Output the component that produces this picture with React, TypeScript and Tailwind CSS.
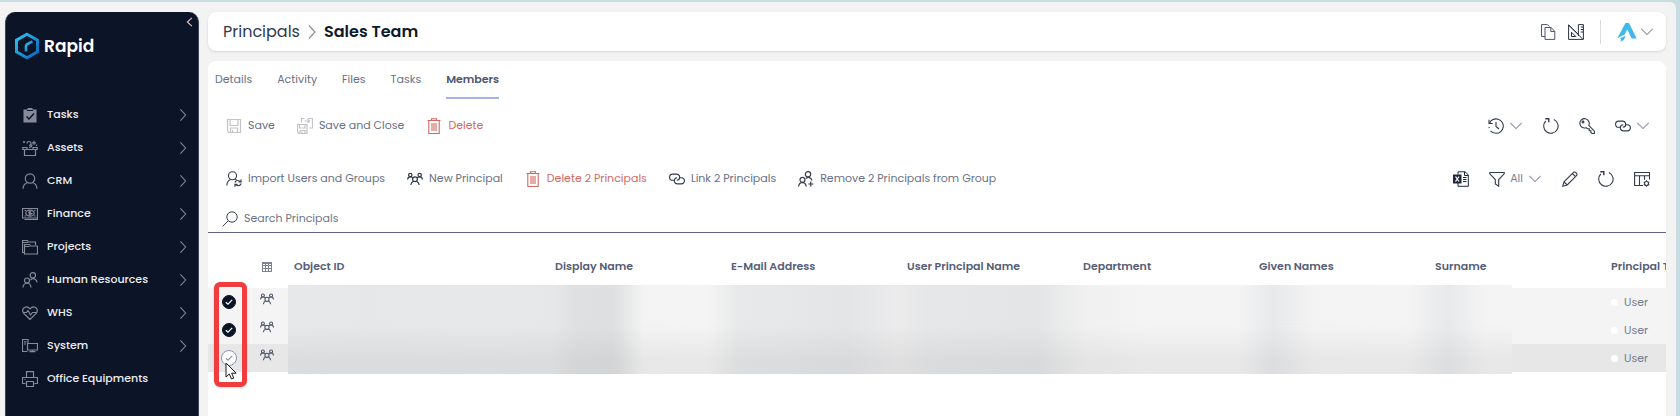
import React from "react";

type IconProps = { className?: string };

function Glyph({ className = "size-4", children, sw = 1 }: { className?: string; children: React.ReactNode; sw?: number }) {
  return (
    <svg viewBox="0 0 16 16" fill="none" stroke="currentColor" strokeWidth={sw} className={"shrink-0 " + className} aria-hidden="true">
      {children}
    </svg>
  );
}

const ChevronRight = ({ className }: IconProps) => (
  <Glyph className={className} sw={1.2}><path d="M5 1.500l6 6.500-6 6.500" /></Glyph>
);
const ChevronDown = ({ className = "size-3.5 text-[#8d93a3]" }: IconProps) => (
  <Glyph className={className} sw={1.2}><path d="M1.500 4.500L8 11l6.500-6.500" /></Glyph>
);

/* sidebar icons */
const TasksIcon = () => (
  <Glyph>
    <path d="M1.500 2.500h3.500l1-1.500h4l1 1.500h3.500v13h-13z" fill="currentColor" stroke="none" />
    <path d="M5 3.500h6" stroke="#0c1427" />
    <path d="M4.500 9.500l2.500 2.500 5-5.500" stroke="#0c1427" strokeWidth="1.500" />
  </Glyph>
);
const AssetsIcon = () => (
  <Glyph sw={1.2}>
    <path d="M2.500 9v6.500h11V9M.8 7.500h4.200v2H.8zM11 7.500h4.200v2H11zM5 9.500h6" />
    <path d="M5 3.500q0-2 2-2t2 2-2 2M7 7.500q3 0 3-3" />
    <path d="M12 .8v4M10 2.800h4M2 1v2M1 2h2M14.500 4.500v1.500" />
  </Glyph>
);
const PersonIcon = () => (
  <Glyph sw={1.2}>
    <circle cx="8" cy="5.500" r="4.700" />
    <path d="M1 15.800c.3-3.600 2-5.600 4.600-6.300M15 15.800c-.3-3.600-2-5.600-4.600-6.300" />
  </Glyph>
);
const FinanceIcon = () => (
  <Glyph sw={1.2}>
    <path d="M.5 2.500h15v9.500H.500zM2.500 13.500h13v-1.500" />
    <path d="M2.500 4.500h1.500M12 4.500h1.500M2.500 10h1.500M12 10h1.500" />
    <ellipse cx="8" cy="7.200" rx="4.200" ry="3" />
    <path d="M8 4.500v5.500M9.300 6q-2.600-.6-2.600.5t2.600 1-2.600 1.200" />
  </Glyph>
);
const ProjectsIcon = () => (
  <Glyph sw={1.2}>
    <path d="M2.500 13.500h-2v-12h5l1 1.500h7v3" />
    <path d="M2.500 5.500h5l1.200 1.500h6.800v8h-13zM.5 3.500h5.500M2.500 7.500h5" />
  </Glyph>
);
const PeopleIcon = () => (
  <Glyph sw={1.2}>
    <circle cx="10.800" cy="3.300" r="2.700" />
    <path d="M8.500 8q2.400-2.300 4.600-.8 1.800 1.200 2 3.300" />
    <circle cx="5" cy="8.500" r="2.500" />
    <path d="M1 15.500q.4-4.300 4-4.500 3.600.2 4 4.500" />
  </Glyph>
);
const HeartIcon = () => (
  <Glyph sw={1.2}>
    <path d="M8 14.500L1.800 8.300Q-.3 5.500 1.600 3.200 4.700.3 8 3.800q3.300-3.500 6.400-.6 1.900 2.300-.2 5.100z" />
    <path d="M1 7.500h3.500L6 5.500l2.500 4.500L10.500 7.500H15" />
  </Glyph>
);
const SystemIcon = () => (
  <Glyph sw={1.2}>
    <path d="M5.500 13.500h-5v-12h5.500v4M2 3.800h2.500M2 6h2" />
    <path d="M5.500 5.500h10v6.500h-10zM10.500 12v2M7.500 13.700h6" />
  </Glyph>
);
const PrinterIcon = () => (
  <Glyph sw={1.2}>
    <path d="M4.500 6.500V.6h7v5.900M3.500 12.500h-3V6.500h15v6h-3M4.500 10.500h7v5h-7zM2.500 8.500h1" />
  </Glyph>
);

/* command bar icons */
const SaveIcon = () => (
  <Glyph className="size-4 text-[#c4c4c8]" sw={1.2}>
    <path d="M1.500 1.500h13v13H3l-1.500-1.500zM4 1.500V7.500h8V1.500M4.500 14.500v-4.500h7v4.500M6.500 12v2.500" />
  </Glyph>
);
const SaveCloseIcon = () => (
  <Glyph className="size-4 text-[#c4c4c8]" sw={1.2}>
    <path d="M.5 6.500h9.500v9h-8l-1.500-1.500zM2.500 6.500v3.500h5.500V6.500M3 15.500v-3h5v3M5 13.500v2" />
    <path d="M4.500 4.500v-4h3M11 .5h4.500v9.500h-3M7.500 3h5M10.500 1l2 2-2 2" />
  </Glyph>
);
const TrashIcon = () => (
  <Glyph className="size-4 text-[#cf6a63]" sw={1.1}>
    <path d="M1.500 2.500h13M5.500 2.500V.8h5v1.700M2.800 2.500v13h10.400v-13M6 5v8M8 5v8M10 5v8" />
  </Glyph>
);
const ImportIcon = () => (
  <Glyph sw={1.1}>
    <circle cx="6.500" cy="4.800" r="4" />
    <path d="M.8 14.500c.2-3 1.500-4.900 3.700-5.900M9 8l1.500.8" />
    <path d="M8.800 11.500q1-2.200 3.200-2 1.500.1 2.500 1.500M15.200 12.500q-1 2.300-3.200 2.200-1.500-.1-2.500-1.500M15 8.500V11h-2.500M9 15.800v-2.500h2.500" strokeWidth="1.200" />
  </Glyph>
);
const GroupIcon = ({ className }: IconProps) => (
  <Glyph className={className} sw={1.2}>
    <circle cx="3.300" cy="4" r="1.700" />
    <circle cx="12.700" cy="4" r="1.700" />
    <circle cx="8" cy="8.300" r="2.400" />
    <path d="M.6 8.500Q.8 5.800 3.300 5.800q1.800 0 2.900 1.400M15.400 8.500Q15.200 5.800 12.700 5.800q-1.800 0-2.900 1.400M3.800 14Q4.200 11 6.500 10.200M12.200 14Q11.800 11 9.500 10.200" />
  </Glyph>
);
const LinkIcon = () => (
  <Glyph sw={1.1}>
    <path d="M6 9.300H3.700a3.100 3.100 0 010-6.200h3.900a3.100 3.100 0 013.100 3.100 3.100 3.100 0 01-2.900 3.100" />
    <path d="M10.500 6.700h1.800a3.100 3.100 0 010 6.200H8.400a3.100 3.100 0 01-3.100-3.100 3.100 3.100 0 012.900-3.100" />
  </Glyph>
);
const PeopleAddIcon = () => (
  <Glyph sw={1.2}>
    <circle cx="10" cy="3.300" r="2.700" />
    <path d="M8 7.500q2.300-1.900 4.200-.5 1.500 1 1.700 2.500" />
    <circle cx="4.500" cy="8.800" r="2.500" />
    <path d="M.6 15.500q.4-4 3.900-4.200 3.200.2 3.700 4.200M12.800 10.500v5M10.300 13h5" />
  </Glyph>
);
const HistoryIcon = () => (
  <Glyph sw={1.1}>
    <path d="M1.500 5.200A7.200 7.200 0 118 15.300a7.300 7.300 0 01-5.500-2.500" />
    <path d="M1 1.800v3.700h3.700M8 4v4.500l3 2.500" />
    <path d="M1 9l.3 1.200" />
  </Glyph>
);
const RefreshIcon = () => (
  <Glyph sw={1.1}>
    <path d="M10.800 1.500A7.200 7.200 0 112.800 3" />
    <path d="M2.300.8h3.500v3.500" strokeWidth="1.400" />
  </Glyph>
);
const KeyIcon = () => (
  <Glyph sw={1.1}>
    <path d="M9.800 7.300a4.700 4.700 0 10-2.600 2.400l1.300 1.100h1.700v1.900h1.700v1.800l1.200 1h2.300v-2.400z" />
    <circle cx="4" cy="4" r=".9" />
  </Glyph>
);
const ExcelIcon = () => (
  <Glyph className="size-4 text-[#1e2637]">
    <path d="M5 3.500V.8h7l3.300 3v11.500H5V12M11.500.8V4.500h3.800" />
    <path d="M10 6.500h3.500M10 8.500h3.500M10 10.500h3.500" />
    <path d="M0 3.500h8.500v9H0z" fill="currentColor" stroke="none" />
    <path d="M2.500 5.500l3.500 5M6 5.500l-3.500 5" stroke="#fff" strokeWidth="1.300" />
  </Glyph>
);
const FilterIcon = () => (
  <Glyph sw={1.1}><path d="M.8 1.500h14.400v1.300L9.700 8.500v6.700L6.300 13V8.500L.8 2.800z" /></Glyph>
);
const PencilIcon = () => (
  <Glyph sw={1.1}>
    <path d="M.8 15.200l1.200-4.400L11.500 1.300q1-.8 2.200.2l.8.800q1 1.200.2 2.200L5.200 14zM2 10.800L5.200 14M10.300 2.500l3.200 3.200" />
  </Glyph>
);
const TableSettingsIcon = () => (
  <Glyph sw={1.1}>
    <path d="M9 14.500H.6v-13h14.900v7M.5 4.800h15M5.500 4.800v9.700M10.500 4.800v4" />
    <circle cx="12.500" cy="12.500" r="2" />
    <path d="M12.500 9.300v1.200M12.500 14.500v1.300M9.700 10.900l1.100.6M14.200 13.500l1.100.6M9.700 14.100l1.100-.6M14.200 11.500l1.100-.6" />
  </Glyph>
);
const CopyIcon = () => (
  <Glyph className="size-4 text-[#4d5570]">
    <path d="M5 12.500H1.500V.6h6l2 2" />
    <path d="M5 3.500h6l3.800 3.700v8.200H5zM10.800 3.500v4h4" />
  </Glyph>
);
const RulerIcon = () => (
  <Glyph className="size-4 text-[#2b2f42]">
    <path d="M.6 1v14.400h14.800V.6h-5v9.800zM.6 1L15 15.400M3.500 8.200v4.300h4.300zM12.800 3h2.600M12.800 5.500h2.600M12.800 8h2.600M10.400 10v2" />
  </Glyph>
);
const SearchIcon = () => (
  <Glyph className="size-4 text-[#3c4356]">
    <circle cx="10" cy="6" r="5.200" />
    <path d="M6.300 9.700L.6 15.400" />
  </Glyph>
);
const GridIcon = () => (
  <svg viewBox="0 0 10 10" className="size-2.5 text-[#7d8496]" fill="none" stroke="currentColor" aria-hidden="true">
    <path d="M0 1h10" strokeWidth="2" />
    <path d="M0 3.500h10M0 6.500h10M0 9.500h10M.5 0v10M3.500 0v10M6.500 0v10M9.500 0v10" />
  </svg>
);

const nav: { label: string; icon: React.ReactNode; more: boolean }[] = [
  { label: "Tasks", icon: <TasksIcon />, more: true },
  { label: "Assets", icon: <AssetsIcon />, more: true },
  { label: "CRM", icon: <PersonIcon />, more: true },
  { label: "Finance", icon: <FinanceIcon />, more: true },
  { label: "Projects", icon: <ProjectsIcon />, more: true },
  { label: "Human Resources", icon: <PeopleIcon />, more: true },
  { label: "WHS", icon: <HeartIcon />, more: true },
  { label: "System", icon: <SystemIcon />, more: true },
  { label: "Office Equipments", icon: <PrinterIcon />, more: false },
];

function Sidebar() {
  return (
    <aside className="relative mt-2.5 ml-[5px] w-[194px] shrink-0 rounded-t-[10px] border-x border-[#3d4557] bg-[#0c1427]">
      <button aria-label="Collapse menu" className="absolute top-1 right-0.5 text-[#e2c6c6]">
        <Glyph className="size-3"><path d="M10.500 2.500L4.500 8l6 5.500" strokeWidth="1.500" /></Glyph>
      </button>
      <a href="#home" className="mt-5 ml-2 flex items-center gap-1 text-white">
        <svg viewBox="0 0 26 28" className="h-7 w-[26px]" fill="none" aria-hidden="true">
          <defs>
            <linearGradient id="hex" x1="0" y1="0" x2="1" y2="1">
              <stop offset="0" stopColor="#35c3f2" />
              <stop offset="1" stopColor="#0b62b8" />
            </linearGradient>
          </defs>
          <path d="M13 2.200l10.500 5.900v11.800L13 25.800 2.500 19.900V8.100z" stroke="url(#hex)" strokeWidth="3" />
          <path d="M12 19.500v-5q0-1.500 1.300-2.300L18.500 9.500" stroke="url(#hex)" strokeWidth="2.600" />
        </svg>
        <span className="pt-0.5 text-[17px] font-semibold">Rapid</span>
      </a>
      <nav className="mt-[38px]">
        {nav.map((n) => (
          <a key={n.label} href={"#" + n.label} className="flex h-[33px] items-center pr-2 pl-4 text-[#858b99]">
            {n.icon}
            <span className="ml-[9px] flex-1 text-[11px] font-medium whitespace-nowrap text-[#eceef2]">{n.label}</span>
            {n.more && <ChevronRight className="size-3.5" />}
          </a>
        ))}
      </nav>
    </aside>
  );
}

function Command({ icon, label, danger = false }: { icon: React.ReactNode; label: string; danger?: boolean }) {
  return (
    <button className="flex items-center gap-1.5 text-[#333a4b]">
      {icon}
      <span className={danger ? "text-[#cf6a63]" : "text-[#687086]"}>{label}</span>
    </button>
  );
}

function IconButton({ name, children }: { name: string; children: React.ReactNode }) {
  return (
    <button aria-label={name} className="flex items-center gap-[5px] text-[#333a4b]">
      {children}
    </button>
  );
}

const tabs = ["Details", "Activity", "Files", "Tasks", "Members"];
const columns = ["Display Name", "E-Mail Address", "User Principal Name", "Department", "Given Names", "Surname", "Principal Type"];
const rows = [
  { id: 1, selected: true },
  { id: 2, selected: true },
  { id: 3, selected: false },
];

function MembersTable() {
  return (
    <div className="relative overflow-hidden pb-1">
      <table className="w-[1571px] table-fixed border-collapse text-left">
        <colgroup>
          <col className="w-10" />
          <col className="w-[38px]" />
          <col className="w-[261px]" />
          {columns.map((c) => (
            <col key={c} className="w-44" />
          ))}
        </colgroup>
        <thead>
          <tr className="h-[55px] text-[11px] text-[#565e78]">
            <th aria-label="Selected" />
            <th aria-label="Type"><span className="flex justify-center pt-3"><GridIcon /></span></th>
            {["Object ID", ...columns].map((c) => (
              <th key={c} className="px-2 pt-3 font-semibold whitespace-nowrap">{c}</th>
            ))}
          </tr>
        </thead>
        <tbody>
          {rows.map((r) => (
            <tr key={r.id} className={r.selected ? "h-7 bg-[#f4f4f4]" : "h-7 bg-[#e7e7e7]"}>
              <td className="p-0">
                <label className="relative flex h-7 items-center justify-center pl-0.5">
                  <input
                    type="checkbox"
                    defaultChecked={r.selected}
                    aria-label={"Select row " + r.id}
                    className="size-4 appearance-none rounded-full border border-[#8d93a3] bg-white checked:size-3.5 checked:border-[#0c1427] checked:bg-[#0c1427]"
                  />
                  <svg viewBox="0 0 8 8" fill="none" strokeWidth="1.200" className={r.selected ? "pointer-events-none absolute size-2 stroke-white" : "pointer-events-none absolute size-2 stroke-[#8d93a3]"} aria-hidden="true">
                    <path d="M.8 4.200l2.200 2L7.200 1.800" />
                  </svg>
                </label>
              </td>
              <td className="p-0 text-[#4d556b]">
                <span className="flex h-7 justify-center pt-1"><GroupIcon className="size-3.5" /></span>
              </td>
              {["Object ID", ...columns.slice(0, 6)].map((c) => (
                <td key={c} />
              ))}
              <td className="px-2 py-0 text-[11px] text-[#747c94]">
                <span className="flex items-center gap-1.5">
                  <i className="size-[7px] rounded-full bg-white" />
                  User
                </span>
              </td>
            </tr>
          ))}
        </tbody>
      </table>
      <div className="pointer-events-none absolute top-[52px] left-20 h-[89px] w-[1224px] bg-[linear-gradient(90deg,#e7e8e9_0px,#e6e7e9_80px,#e7e8e9_200px,#e6e7e9_265px,#dfe0e1_290px,#dddfe0_325px,#f3f3f3_355px,#f4f4f4_420px,#e8e9ea_450px,#e4e5e7_560px,#ebebec_610px,#e6e7e8_640px,#e4e5e7_750px,#f0f0f0_795px,#f4f4f4_860px,#f4f4f4_950px,#e8e9eb_985px,#f3f3f3_1025px,#f4f4f4_1120px,#e8e9eb_1160px,#f3f3f3_1195px,#f4f4f4_1224px)]">
        <div className="h-full bg-[linear-gradient(180deg,transparent_45%,rgba(0,0,0,0.05)_85%)]" />
      </div>
    </div>
  );
}

export default function App() {
  return (
    <div className="min-h-screen bg-[#c8dde1] pt-0.5 pr-1 font-[Poppins,Inter,sans-serif] text-[11px]">
      <div className="flex min-h-[calc(100vh-2px)] rounded-tr-md bg-[#f3f3f3]">
        <Sidebar />
        <main className="mt-2.5 mr-2.5 ml-[9px] flex min-w-0 flex-1 flex-col gap-2.5">
          <header className="flex h-[39px] shrink-0 items-center rounded-lg bg-white pr-3 pl-[15px] shadow-sm">
            <a href="#principals" className="text-base text-[#2f3a4d]">Principals</a>
            <ChevronRight className="mx-1 size-4 text-[#8d8d9a]" />
            <h1 className="text-base font-semibold text-[#10182b]">Sales Team</h1>
            <div className="ml-auto flex items-center">
              <IconButton name="Copy"><CopyIcon /></IconButton>
              <span className="w-3" />
              <IconButton name="Design"><RulerIcon /></IconButton>
              <span className="mx-4 h-6 w-px bg-[#dcdce0]" />
              <button aria-label="Account" className="flex items-center gap-[3px]">
                <svg viewBox="0 0 20 20" className="size-5" aria-hidden="true">
                  <path d="M8.500 1h3.500L19.700 16.500h-5L10.300 7.500 7.500 12.500.300 16.300z" fill="#3fb8ea" />
                  <path d="M2.800 16.500l5.700-2.700-1.300 3.700-3.700 2.500.7-3z" fill="#3fb8ea" />
                </svg>
                <ChevronDown />
              </button>
            </div>
          </header>

          <section className="flex-1 rounded-t-lg bg-white">
            <div role="tablist" className="flex gap-[25px] pt-[9px] pl-[7px]">
              {tabs.map((t) => (
                <button
                  key={t}
                  role="tab"
                  aria-selected={t === "Members"}
                  className={t === "Members" ? "h-[29px] border-b-2 border-[#a5b4e0] pb-2 font-semibold text-[#4c5570]" : "h-[29px] border-b-2 border-transparent pb-2 text-[#687086]"}
                >
                  {t}
                </button>
              ))}
            </div>

            <div className="flex h-[53px] items-center pr-4 pl-[18px]">
              <div className="flex items-center gap-[22px]">
                <Command icon={<SaveIcon />} label="Save" />
                <Command icon={<SaveCloseIcon />} label="Save and Close" />
                <Command icon={<TrashIcon />} label="Delete" danger />
              </div>
              <div className="ml-auto flex items-center gap-5">
                <IconButton name="History"><HistoryIcon /><ChevronDown /></IconButton>
                <IconButton name="Refresh"><RefreshIcon /></IconButton>
                <IconButton name="Permissions"><KeyIcon /></IconButton>
                <IconButton name="Links"><LinkIcon /><ChevronDown /></IconButton>
              </div>
            </div>

            <div className="flex h-[53px] items-center pr-4 pl-[18px]">
              <div className="flex items-center gap-[22px]">
                <Command icon={<ImportIcon />} label="Import Users and Groups" />
                <Command icon={<GroupIcon />} label="New Principal" />
                <Command icon={<TrashIcon />} label="Delete 2 Principals" danger />
                <Command icon={<LinkIcon />} label="Link 2 Principals" />
                <Command icon={<PeopleAddIcon />} label="Remove 2 Principals from Group" />
              </div>
              <div className="ml-auto flex items-center gap-5">
                <IconButton name="Export to Excel"><ExcelIcon /></IconButton>
                <button className="flex items-center gap-[5px] text-[#333a4b]">
                  <FilterIcon />
                  <span className="text-[#7a8194]">All</span>
                  <ChevronDown />
                </button>
                <IconButton name="Edit"><PencilIcon /></IconButton>
                <IconButton name="Reload"><RefreshIcon /></IconButton>
                <IconButton name="Table settings"><TableSettingsIcon /></IconButton>
              </div>
            </div>

            <div className="flex h-[28px] items-center gap-1.5 border-b border-[#5b6784] pl-3.5">
              <SearchIcon />
              <input type="search" aria-label="Search Principals" placeholder="Search Principals" className="flex-1 bg-transparent text-[11px] outline-none placeholder:text-[#6c7488]" />
            </div>

            <div className="relative">
              <MembersTable />
              <div className="pointer-events-none absolute top-[49px] left-1.5 h-[105px] w-[33px] rounded-md border-[5px] border-[#f03c3c] shadow-sm" />
              <svg viewBox="0 0 12 18" className="pointer-events-none absolute top-[129px] left-[17px] h-[18px] w-3" aria-hidden="true">
                <path d="M1 1v14l3.300-3 2.200 5 2.300-1-2.200-4.800h4.600z" fill="#fff" stroke="#1b1b1b" />
              </svg>
            </div>
          </section>
        </main>
      </div>
    </div>
  );
}
